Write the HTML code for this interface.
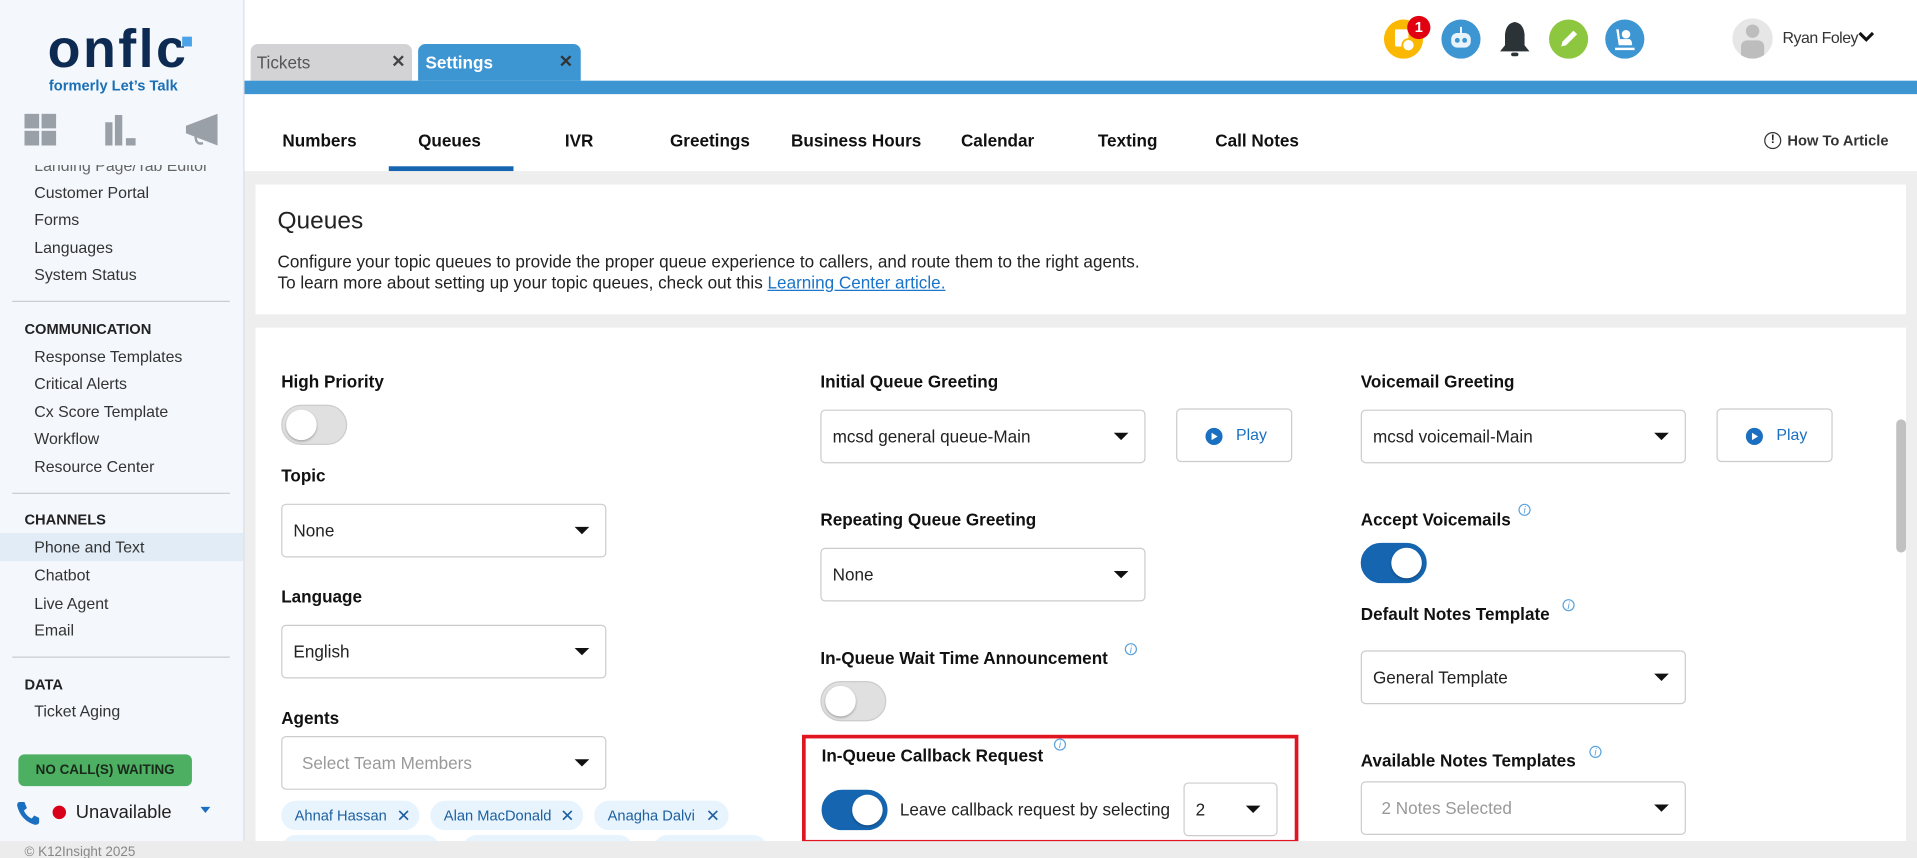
<!DOCTYPE html>
<html><head><meta charset="utf-8"><style>
*{box-sizing:border-box;margin:0;padding:0}
html,body{width:1917px;height:858px;overflow:hidden;background:#fff}
body{font-family:"Liberation Sans",sans-serif;color:#222}
#w{position:absolute;left:0;top:0;width:1568px;height:702px;transform:scale(1.22258);transform-origin:0 0;overflow:hidden;background:#fff}
.a{position:absolute}
.sb{left:0;top:0;width:200px;height:688px;background:#f4f7fc;border-right:1px solid #dcdfe4}
.si{position:absolute;left:28px;font-size:13px;color:#333}
.sh{position:absolute;left:20px;font-size:12px;font-weight:bold;color:#222}
.dv{position:absolute;left:10px;width:178px;height:1px;background:#c8ccd2}
.nav{position:absolute;top:107px;font-size:14px;font-weight:bold;color:#111}
.lbl{position:absolute;font-size:14px;font-weight:bold;color:#111}
.sel{position:absolute;height:44px;border:1px solid #ccc;border-radius:4px;background:#fff;font-size:14px;color:#222;padding-left:9px;line-height:42px}
.sel:after{content:"";position:absolute;right:13px;top:18px;border-left:6px solid transparent;border-right:6px solid transparent;border-top:6px solid #111}
.tg{position:absolute;width:54px;height:33px;border-radius:17px;background:#e0e0e0;border:1px solid #ccc}
.tg:after{content:"";position:absolute;left:3px;top:3px;width:25px;height:25px;border-radius:50%;background:#fff;box-shadow:0 1px 2px rgba(0,0,0,.3)}
.tg.on{background:#1565b0;border-color:#1565b0}
.tg.on:after{left:24px}
.play{position:absolute;width:95px;height:44px;border:1px solid #ccc;border-radius:4px;background:#fff;font-size:13px;color:#1a6fc0}
.play i{position:absolute;left:23px;top:15px;width:14px;height:14px;border-radius:50%;background:#1a6fc0}
.play i:after{content:"";position:absolute;left:5px;top:3.5px;border-top:3.5px solid transparent;border-bottom:3.5px solid transparent;border-left:5px solid #fff}
.play span{position:absolute;left:48px;top:13px}
.inf{position:absolute;width:10px;height:10px;border:1px solid #5aa2dc;border-radius:50%;font-size:8px;color:#5aa2dc;text-align:center;line-height:9px;font-style:italic}
.chip{position:absolute;top:655px;height:24px;border-radius:12px;background:#e8f4fd;color:#1d5fa0;font-size:12px;line-height:24px;padding-left:11px}
.chip b{font-weight:normal;position:absolute;right:7px;font-size:14px}
.ic{position:absolute;top:16px;width:32px;height:32px;border-radius:50%}
</style></head><body><div id="w">

<div class="a sb">
 <div class="a" style="left:39px;top:16px;font-size:44px;font-weight:bold;color:#0d2b52;letter-spacing:2px">onflc</div>
 <div class="a" style="left:148px;top:29px;width:9px;height:9px;background:#f4f7fc"></div>
 <div class="a" style="left:149px;top:30px;width:8px;height:8px;background:#4aa3e8"></div>
 <div class="a" style="left:40px;top:63px;font-size:12px;font-weight:bold;color:#1a6fb5">formerly Let’s Talk</div>
 <svg class="a" style="left:20px;top:93px" width="26" height="26"><rect x="0" y="0" width="12" height="12" fill="#9aa0a8"/><rect x="14" y="0" width="12" height="12" fill="#9aa0a8"/><rect x="0" y="14" width="12" height="12" fill="#9aa0a8"/><rect x="14" y="14" width="12" height="12" fill="#9aa0a8"/></svg>
 <svg class="a" style="left:86px;top:94px" width="25" height="25"><rect x="0" y="6" width="6" height="19" fill="#9aa0a8"/><rect x="8" y="0" width="6" height="25" fill="#9aa0a8"/><rect x="17" y="19" width="8" height="6" fill="#9aa0a8"/></svg>
 <svg class="a" style="left:152px;top:93px" width="26" height="28"><path d="M0 10 L26 0 V26 L0 16Z" fill="#9aa0a8"/><path d="M8 18 q0 8 6 6" stroke="#9aa0a8" stroke-width="2" fill="none"/></svg>
 <div class="si" style="top:128px;color:#666;clip-path:inset(7px 0 0 0)">Landing Page/Tab Editor</div>
 <div class="si" style="top:150px">Customer Portal</div>
 <div class="si" style="top:172px">Forms</div>
 <div class="si" style="top:195px">Languages</div>
 <div class="si" style="top:217px">System Status</div>
 <div class="dv" style="top:246px"></div>
 <div class="sh" style="top:262px">COMMUNICATION</div>
 <div class="si" style="top:284px">Response Templates</div>
 <div class="si" style="top:306px">Critical Alerts</div>
 <div class="si" style="top:329px">Cx Score Template</div>
 <div class="si" style="top:351px">Workflow</div>
 <div class="si" style="top:374px">Resource Center</div>
 <div class="dv" style="top:403px"></div>
 <div class="sh" style="top:418px">CHANNELS</div>
 <div class="a" style="left:0;top:436px;width:199px;height:23px;background:#e1ecf7"></div>
 <div class="si" style="top:440px">Phone and Text</div>
 <div class="si" style="top:463px">Chatbot</div>
 <div class="si" style="top:486px">Live Agent</div>
 <div class="si" style="top:508px">Email</div>
 <div class="dv" style="top:537px"></div>
 <div class="sh" style="top:553px">DATA</div>
 <div class="si" style="top:574px">Ticket Aging</div>
 <div class="a" style="left:15px;top:617px;width:142px;height:26px;background:#4caf62;border-radius:5px;font-size:11px;font-weight:bold;color:#1a2a1a;text-align:center;line-height:26px">NO CALL(S) WAITING</div>
 <svg class="a" style="left:13px;top:655px" width="20" height="20"><path d="M3 1 L7 1 L9 6 L6.5 8 Q9 13 13 14.5 L15 12 L19 14 L19 18 Q18 20 15 19.5 Q4 16 1 4 Q1 1 3 1Z" fill="#1a6fc0"/></svg>
 <div class="a" style="left:43px;top:659px;width:11px;height:11px;border-radius:50%;background:#d9001b"></div>
 <div class="a" style="left:62px;top:656px;font-size:15px;color:#222">Unavailable</div>
 <div class="a" style="left:164px;top:660px;border-left:4px solid transparent;border-right:4px solid transparent;border-top:5px solid #1a6fc0"></div>
</div>

<div class="a" style="left:205px;top:36px;width:132px;height:30px;background:#d3d3d5;border-radius:6px 6px 0 0"><span class="a" style="left:5px;top:7px;font-size:14px;color:#555">Tickets</span><span class="a" style="left:115px;top:6px;font-size:14px;font-weight:bold;color:#444">✕</span></div>
<div class="a" style="left:342px;top:36px;width:133px;height:30px;background:#3d96d2;border-radius:6px 6px 0 0"><span class="a" style="left:6px;top:7px;font-size:14px;font-weight:bold;color:#fff">Settings</span><span class="a" style="left:115px;top:6px;font-size:14px;font-weight:bold;color:#333">✕</span></div>
<div class="a" style="left:200px;top:66px;width:1368px;height:11px;background:#3d96d2"></div>

<div class="ic" style="left:1132px;background:#fbb800"><svg width="32" height="32"><rect x="9" y="8" width="11" height="14" fill="#fff" rx="1"/><circle cx="20" cy="21" r="5" fill="#fff" stroke="#fbb800" stroke-width="1.5"/></svg></div>
<div class="a" style="left:1151px;top:13px;width:19px;height:19px;border-radius:50%;background:#e10012;color:#fff;font-size:12px;font-weight:bold;text-align:center;line-height:19px">1</div>
<div class="ic" style="left:1179px;background:#3d96d2"><svg width="32" height="32"><rect x="8" y="11" width="16" height="12" rx="5" fill="#e9f3fb"/><circle cx="13" cy="17" r="2" fill="#3d96d2"/><circle cx="19" cy="17" r="2" fill="#3d96d2"/><line x1="16" y1="6" x2="16" y2="11" stroke="#fff" stroke-width="1.5"/></svg></div>
<svg class="a" style="left:1224px;top:16px" width="30" height="32"><path d="M15 2 Q22 3 23 12 L23 21 L27 26 H3 L7 21 V12 Q8 3 15 2Z" fill="#2b3336"/><rect x="12" y="27" width="6" height="3" rx="1.5" fill="#2b3336"/></svg>
<div class="ic" style="left:1267px;background:#8dc63f"><svg width="32" height="32"><path d="M10 22 L11 18 L20 9 L23 12 L14 21Z" fill="#fff"/></svg></div>
<div class="ic" style="left:1313px;background:#3d96d2"><svg width="32" height="32"><circle cx="17" cy="12" r="3.5" fill="#fff"/><path d="M9 8 L11 8 L12 16 H20 Q22 17 22 21 H11Z" fill="#fff"/><rect x="8" y="23" width="16" height="2" fill="#fff"/></svg></div>
<div class="a" style="left:1417px;top:15px;width:33px;height:33px;border-radius:50%;background:#e6e6e6;overflow:hidden"><div class="a" style="left:11px;top:5px;width:11px;height:11px;border-radius:50%;background:#bdbdbd"></div><div class="a" style="left:7px;top:18px;width:19px;height:16px;border-radius:5px;background:#bdbdbd"></div></div>
<div class="a" style="left:1458px;top:23px;font-size:13px;letter-spacing:-0.4px;color:#333;white-space:nowrap">Ryan Foley</div>
<svg class="a" style="left:1520px;top:26px" width="13" height="9"><path d="M1 1 L6.5 6.5 L12 1" stroke="#111" stroke-width="2.5" fill="none"/></svg>

<div class="nav" style="left:231px">Numbers</div>
<div class="nav" style="left:342px">Queues</div>
<div class="nav" style="left:462px">IVR</div>
<div class="nav" style="left:548px">Greetings</div>
<div class="nav" style="left:647px">Business Hours</div>
<div class="nav" style="left:786px">Calendar</div>
<div class="nav" style="left:898px">Texting</div>
<div class="nav" style="left:994px">Call Notes</div>
<div class="a" style="left:318px;top:136px;width:102px;height:4px;background:#1565b0"></div>
<div class="a" style="left:1443px;top:108px;width:14px;height:14px;border:1.5px solid #333;border-radius:50%;font-size:10px;font-weight:bold;text-align:center;line-height:11px">!</div>
<div class="a" style="left:1462px;top:108px;font-size:12px;font-weight:bold;color:#333">How To Article</div>

<div class="a" style="left:200px;top:140px;width:1368px;height:562px;background:#eeeeee"></div>
<div class="a" style="left:209px;top:151px;width:1350px;height:106px;background:#fff"></div>
<div class="a" style="left:227px;top:170px;font-size:20px;color:#222">Queues</div>
<div class="a" style="left:227px;top:206px;font-size:14px;color:#222;line-height:17px">Configure your topic queues to provide the proper queue experience to callers, and route them to the right agents.<br>To learn more about setting up your topic queues, check out this <span style="color:#1a73c8;text-decoration:underline">Learning Center article.</span></div>
<div class="a" style="left:209px;top:268px;width:1350px;height:420px;background:#fff"></div>
<div class="a" style="left:1551px;top:343px;width:8px;height:109px;background:#c1c1c1;border-radius:4px"></div>

<div class="lbl" style="left:230px;top:304px">High Priority</div>
<div class="tg" style="left:230px;top:331px"></div>
<div class="lbl" style="left:230px;top:381px">Topic</div>
<div class="sel" style="left:230px;top:412px;width:266px">None</div>
<div class="lbl" style="left:230px;top:480px">Language</div>
<div class="sel" style="left:230px;top:511px;width:266px">English</div>
<div class="lbl" style="left:230px;top:579px">Agents</div>
<div class="sel" style="left:230px;top:602px;width:266px;color:#999;padding-left:16px">Select Team Members</div>
<div class="chip" style="left:230px;width:113px">Ahnaf Hassan<b>✕</b></div>
<div class="chip" style="left:352px;width:125px">Alan MacDonald<b>✕</b></div>
<div class="chip" style="left:486px;width:110px">Anagha Dalvi<b>✕</b></div>
<div class="chip" style="left:230px;top:683px;width:130px"></div>
<div class="chip" style="left:378px;top:683px;width:140px"></div>
<div class="chip" style="left:534px;top:683px;width:94px"></div>

<div class="lbl" style="left:671px;top:304px">Initial Queue Greeting</div>
<div class="sel" style="left:671px;top:335px;width:266px">mcsd general queue-Main</div>
<div class="play" style="left:962px;top:334px"><i></i><span>Play</span></div>
<div class="lbl" style="left:671px;top:417px">Repeating Queue Greeting</div>
<div class="sel" style="left:671px;top:448px;width:266px">None</div>
<div class="lbl" style="left:671px;top:530px">In-Queue Wait Time Announcement</div>
<div class="inf" style="left:920px;top:526px">i</div>
<div class="tg" style="left:671px;top:557px"></div>
<div class="a" style="left:656px;top:601px;width:406px;height:89px;border:3px solid #e0151f"></div>
<div class="lbl" style="left:672px;top:610px">In-Queue Callback Request</div>
<div class="inf" style="left:862px;top:604px">i</div>
<div class="tg on" style="left:672px;top:646px"></div>
<div class="a" style="left:736px;top:654px;font-size:14px;color:#222">Leave callback request by selecting</div>
<div class="sel" style="left:968px;top:640px;width:77px">2</div>

<div class="lbl" style="left:1113px;top:304px">Voicemail Greeting</div>
<div class="sel" style="left:1113px;top:335px;width:266px">mcsd voicemail-Main</div>
<div class="play" style="left:1404px;top:334px"><i></i><span>Play</span></div>
<div class="lbl" style="left:1113px;top:417px">Accept Voicemails</div>
<div class="inf" style="left:1242px;top:412px">i</div>
<div class="tg on" style="left:1113px;top:444px"></div>
<div class="lbl" style="left:1113px;top:494px">Default Notes Template</div>
<div class="inf" style="left:1278px;top:490px">i</div>
<div class="sel" style="left:1113px;top:532px;width:266px">General Template</div>
<div class="lbl" style="left:1113px;top:614px">Available Notes Templates</div>
<div class="inf" style="left:1300px;top:610px">i</div>
<div class="sel" style="left:1113px;top:639px;width:266px;color:#999;padding-left:16px">2 Notes Selected</div>

<div class="a" style="left:0;top:688px;width:1568px;height:14px;background:#ececec"></div>
<div class="a" style="left:20px;top:691px;font-size:11px;color:#888">© K12Insight 2025</div>
</div></body></html>
